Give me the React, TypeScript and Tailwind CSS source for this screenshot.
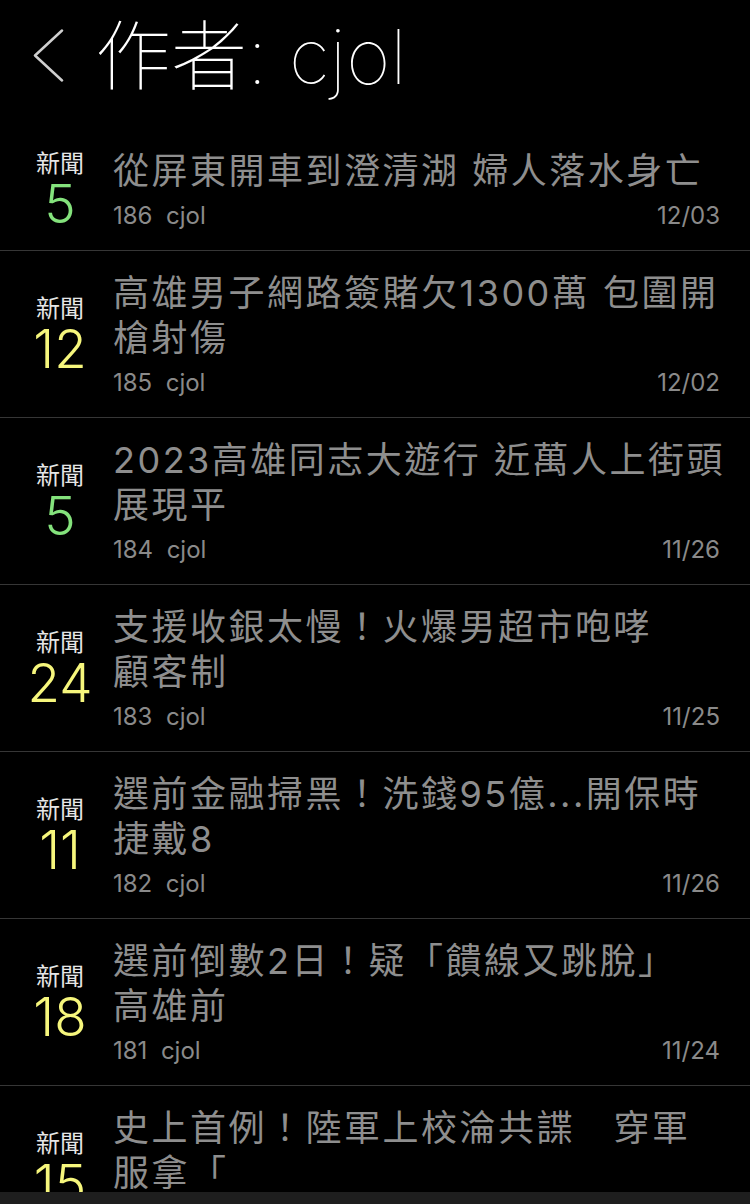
import React from "react";

type Post = {
  count: number;
  lines: string[];
  no: number;
  date: string;
};

const posts: Post[] = [
  { count: 5, lines: ["從屏東開車到澄清湖 婦人落水身亡"], no: 186, date: "12/03" },
  { count: 12, lines: ["高雄男子網路簽賭欠1300萬 包圍開", "槍射傷"], no: 185, date: "12/02" },
  { count: 5, lines: ["2023高雄同志大遊行 近萬人上街頭", "展現平"], no: 184, date: "11/26" },
  { count: 24, lines: ["支援收銀太慢！火爆男超市咆哮", "顧客制"], no: 183, date: "11/25" },
  { count: 11, lines: ["選前金融掃黑！洗錢95億...開保時", "捷戴8"], no: 182, date: "11/26" },
  { count: 18, lines: ["選前倒數2日！疑「饋線又跳脫」", "高雄前"], no: 181, date: "11/24" },
  { count: 15, lines: ["史上首例！陸軍上校淪共諜　穿軍", "服拿「"], no: 180, date: "11/23" },
];

const font = { fontFamily: '"Inter", "Noto Sans CJK TC", sans-serif' };

function Row({ post }: { post: Post }) {
  return (
    <div className="flex items-center border-b border-[#363636] pl-[16px] pr-[30px] pt-[20px] pb-[19px]">
      {/* label + count */}
      <div className="w-[88px] flex flex-col items-center shrink-0">
        <span className="text-[24px] leading-[28px] text-[#e6e6e6]">新聞</span>
        <span
          className={
            "text-[53px] leading-[52px] font-light " +
            (post.count < 10 ? "text-[#84e27c]" : "text-[#f6f67c]")
          }
        >
          {post.count}
        </span>
      </div>

      <div className="flex-1 ml-[9px] min-w-0">
        {post.lines.map((l, i) => (
          <div
            key={i}
            className="text-[36px] leading-[45px] tracking-[2.5px] text-[#8e8e8e] whitespace-nowrap"
          >
            {l}
          </div>
        ))}
        <div className="mt-[7px] flex justify-between text-[24px] leading-[30px] text-[#8a8a8a]">
          <span>{post.no}&nbsp;&nbsp;cjol</span>
          <span>{post.date}</span>
        </div>
      </div>
    </div>
  );
}

export default function App() {
  return (
    <div className="h-[1204px] w-[750px] bg-black flex flex-col overflow-hidden" style={font}>
      {/* Header */}
      <div className="h-[129px] shrink-0 flex items-center pl-[33px] pb-[18px]">
        <svg width="31" height="53" viewBox="0 0 31 53" fill="none">
          <polyline
            points="29,1.5 2,26.5 29,51.5"
            stroke="#cfcfcf"
            strokeWidth="2.5"
            strokeLinecap="round"
            strokeLinejoin="round"
          />
        </svg>
        <h1 className="ml-[31px] text-[76px] leading-none font-thin text-white whitespace-nowrap">
          作者: cjol
        </h1>
      </div>

      {/* List */}
      <div className="flex-1 overflow-hidden">
        {posts.map((p) => (
          <Row key={p.no} post={p} />
        ))}
      </div>

      {/* Tab bar edge */}
      <div className="h-[12px] shrink-0 bg-[#1e1e1e]" />
    </div>
  );
}
